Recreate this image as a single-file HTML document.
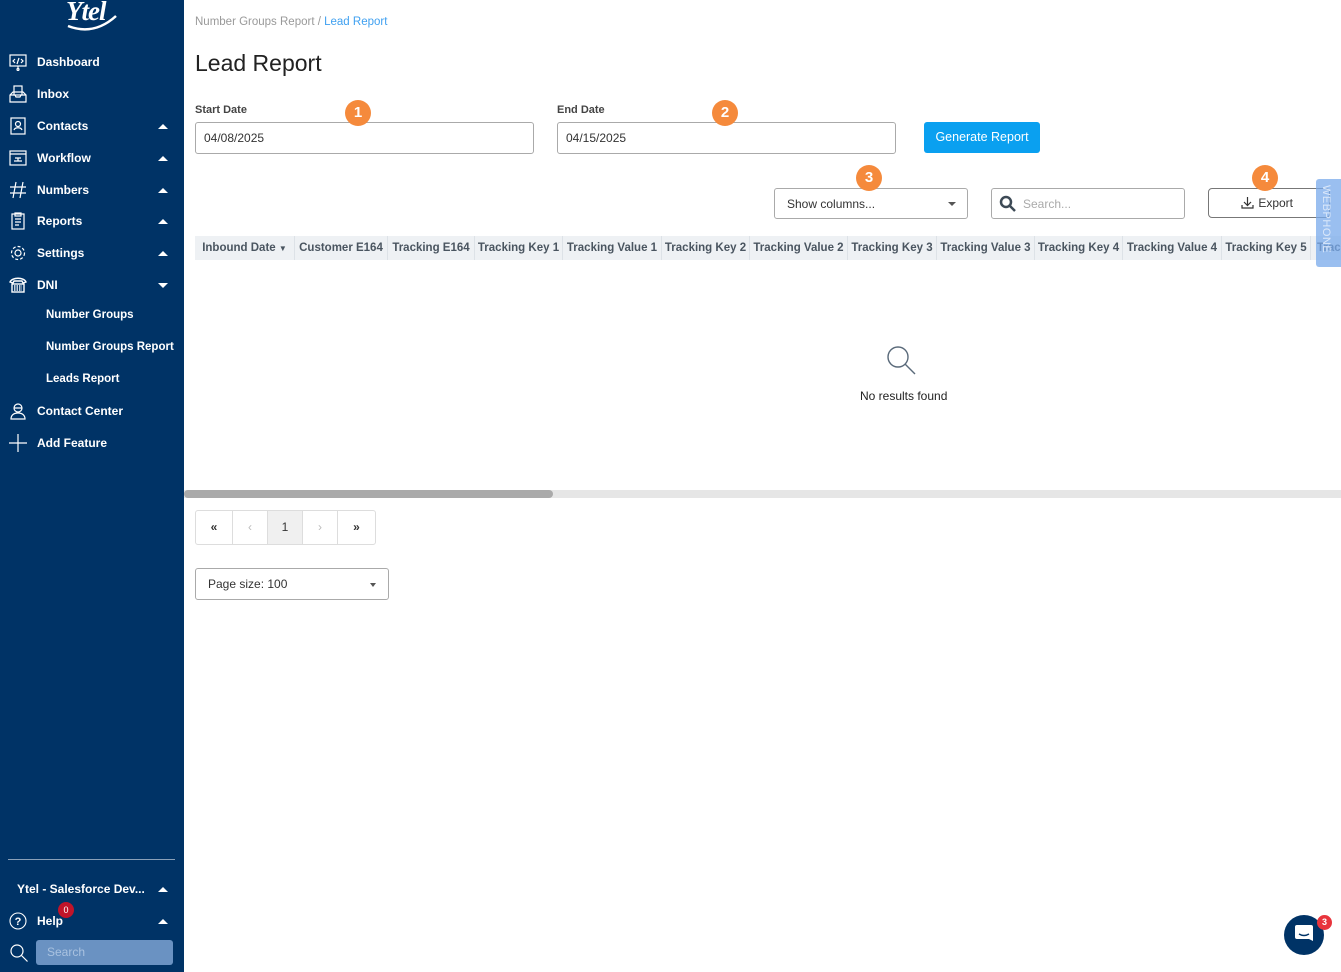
<!DOCTYPE html>
<html><head><meta charset="utf-8"><style>
*{box-sizing:border-box;margin:0;padding:0}
body{width:1341px;height:972px;overflow:hidden;font-family:"Liberation Sans",sans-serif;background:#fff;position:relative;color:#333}
.sb{position:absolute;left:0;top:0;width:184px;height:972px;background:#003366;color:#fff}
.it{position:absolute;left:0;width:184px;height:20px;font-size:12px;font-weight:bold;line-height:20px}
.it .ic{position:absolute;left:9px;top:1px;width:18px;height:18px}
.it .tx{position:absolute;left:37px}
.it .ar{position:absolute;left:158px;top:8px;width:0;height:0;border-left:5px solid transparent;border-right:5px solid transparent;border-bottom:5px solid #fff}
.it .ar.d{border-bottom:none;border-top:5px solid #fff}
.sub{position:absolute;left:46px;font-size:11.5px;font-weight:bold;line-height:16px}
.abs{position:absolute}
.lbl{font-size:11px;font-weight:bold;color:#444}
.inp{border:1px solid #aaa;border-radius:3px;background:#fff;font-size:12px;color:#333;padding-left:8px;line-height:30px}
.badge{position:absolute;width:26px;height:26px;border-radius:50%;background:#f58a3c;color:#fff;font-weight:bold;font-size:15px;text-align:center;line-height:26px}
.th{position:absolute;top:236px;height:24px;background:#eef1f4;border-right:1px solid #dde2e7;font-size:11.5px;font-weight:bold;color:#4a5560;line-height:24px;text-align:center;white-space:nowrap;overflow:hidden}
</style></head><body>
<div class="sb">
 <div class="abs" style="left:66px;top:-4px;font-size:27px;font-style:italic;font-weight:bold;font-family:'Liberation Serif',serif;letter-spacing:-1px">Ytel</div>
 <svg class="abs" style="left:64px;top:14px" width="56" height="18"><path d="M4 12 Q30 22 52 2" stroke="#fff" stroke-width="2.5" fill="none"/></svg>
 <div class="it" style="top:52px"><svg class="ic" viewBox="0 0 18 18" fill="none" stroke="#fff" stroke-width="1.2"><rect x="1" y="2" width="16" height="11"/><path d="M6 6l-2 2 2 2M12 6l2 2-2 2M10 5l-2 6M9 13v3"/><circle cx="9" cy="16.5" r="1"/></svg><span class="tx">Dashboard</span></div>
 <div class="it" style="top:84px"><svg class="ic" viewBox="0 0 18 18" fill="none" stroke="#fff" stroke-width="1.2"><rect x="5" y="1" width="8" height="9"/><path d="M1 10l3-3h10l3 3v7H1zM1 10h5l1 2h4l1-2h5"/></svg><span class="tx">Inbox</span></div>
 <div class="it" style="top:116px"><svg class="ic" viewBox="0 0 18 18" fill="none" stroke="#fff" stroke-width="1.2"><rect x="2" y="1" width="14" height="16"/><circle cx="9" cy="7" r="2.5"/><path d="M5 13c1-3 7-3 8 0"/></svg><span class="tx">Contacts</span><span class="ar"></span></div>
 <div class="it" style="top:148px"><svg class="ic" viewBox="0 0 18 18" fill="none" stroke="#fff" stroke-width="1.2"><rect x="1" y="2" width="16" height="14"/><path d="M1 5h16M6 9h6M9 9v3M5 12h8"/></svg><span class="tx">Workflow</span><span class="ar"></span></div>
 <div class="it" style="top:180px"><svg class="ic" viewBox="0 0 18 18" fill="none" stroke="#fff" stroke-width="1.2"><path d="M7 1L4 17M14 1l-3 16M1 6h16M1 12h16"/></svg><span class="tx">Numbers</span><span class="ar"></span></div>
 <div class="it" style="top:211px"><svg class="ic" viewBox="0 0 18 18" fill="none" stroke="#fff" stroke-width="1.2"><rect x="3" y="2" width="12" height="15"/><rect x="6" y="1" width="6" height="3"/><path d="M6 7h6M6 10h6M6 13h4"/></svg><span class="tx">Reports</span><span class="ar"></span></div>
 <div class="it" style="top:243px"><svg class="ic" viewBox="0 0 18 18" fill="none" stroke="#fff" stroke-width="1.2"><circle cx="9" cy="9" r="3"/><circle cx="9" cy="9" r="6.5" stroke-dasharray="3 2"/></svg><span class="tx">Settings</span><span class="ar"></span></div>
 <div class="it" style="top:275px"><svg class="ic" viewBox="0 0 18 18" fill="none" stroke="#fff" stroke-width="1.4"><path d="M1 6c2-5 14-5 16 0l-3 1-1-2H5L4 7z"/><rect x="3" y="8" width="12" height="8"/><path d="M5 10h8M5 12h8M5 14h8" stroke-dasharray="1.5 1"/></svg><span class="tx">DNI</span><span class="ar d"></span></div>
 <div class="sub" style="top:307px">Number Groups</div>
 <div class="sub" style="top:339px">Number Groups Report</div>
 <div class="sub" style="top:371px">Leads Report</div>
 <div class="it" style="top:401px"><svg class="ic" viewBox="0 0 18 18" fill="none" stroke="#fff" stroke-width="1.2"><circle cx="9" cy="6" r="4"/><path d="M2 17c0-4 3-6 7-6s7 2 7 6zM5 6h8"/></svg><span class="tx">Contact Center</span></div>
 <div class="it" style="top:433px"><svg class="ic" viewBox="0 0 18 18" fill="none" stroke="#fff" stroke-width="1.2"><path d="M9 0v18M0 9h18"/></svg><span class="tx">Add Feature</span></div>
 <div class="abs" style="left:8px;top:859px;width:167px;height:1px;background:#8aa0b8"></div>
 <div class="it" style="top:879px"><span class="tx" style="left:17px">Ytel - Salesforce Dev...</span><span class="ar"></span></div>
 <div class="it" style="top:911px"><svg class="ic" viewBox="0 0 18 18" fill="none" stroke="#fff" stroke-width="1.1"><circle cx="9" cy="9" r="8"/><text x="9" y="13" fill="#fff" stroke="none" font-size="11" text-anchor="middle" font-family="Liberation Sans">?</text></svg><span class="tx">Help</span><span class="ar"></span></div>
 <div class="abs" style="left:58px;top:902px;width:16px;height:16px;border-radius:50%;background:#c0142a;font-size:9px;text-align:center;line-height:16px">0</div>
 <svg class="abs" style="left:9px;top:943px" width="20" height="20" fill="none" stroke="#fff" stroke-width="1.2"><circle cx="8" cy="8" r="6"/><path d="M12.5 12.5l6 6"/></svg>
 <div class="abs" style="left:36px;top:940px;width:137px;height:25px;background:#6a92c2;border-radius:3px;font-size:12px;color:#a9c2e0;padding-left:11px;line-height:25px">Search</div>
</div>

<div class="abs" style="left:195px;top:16px;font-size:11.5px;color:#999">Number Groups Report / <span style="color:#3fa0f0">Lead Report</span></div>
<div class="abs" style="left:195px;top:50px;font-size:23px;color:#222;font-weight:300">Lead Report</div>

<div class="abs lbl" style="left:195px;top:104px">Start Date</div>
<div class="abs inp" style="left:195px;top:122px;width:339px;height:32px">04/08/2025</div>
<div class="abs lbl" style="left:557px;top:104px">End Date</div>
<div class="abs inp" style="left:557px;top:122px;width:339px;height:32px">04/15/2025</div>
<div class="abs" style="left:924px;top:122px;width:116px;height:31px;background:#0aa0f0;border-radius:3px;color:#fff;font-size:12.5px;text-align:center;line-height:31px">Generate Report</div>
<div class="badge" style="left:345px;top:100px">1</div>
<div class="badge" style="left:712px;top:100px">2</div>

<div class="abs inp" style="left:774px;top:188px;width:194px;height:31px;padding-left:12px">Show columns...</div>
<div class="abs" style="left:948px;top:202px;border-left:4px solid transparent;border-right:4px solid transparent;border-top:4px solid #555"></div>
<div class="badge" style="left:856px;top:165px">3</div>
<div class="abs inp" style="left:991px;top:188px;width:194px;height:31px;color:#aaa;padding-left:31px">Search...</div>
<svg class="abs" style="left:999px;top:195px" width="18" height="18" fill="none" stroke="#3d4a56" stroke-width="2.5"><circle cx="7" cy="7" r="5"/><path d="M11 11l5 5"/></svg>
<div class="abs" style="left:1208px;top:188px;width:122px;height:30px;border:1px solid #777;border-radius:4px;font-size:12px;text-align:center;line-height:28px;color:#333">&nbsp;&nbsp;&nbsp;&nbsp;Export</div>
<svg class="abs" style="left:1241px;top:196px" width="13" height="13" fill="none" stroke="#333" stroke-width="1.2"><path d="M6.5 1v8M3 6l3.5 3.5L10 6M1 9v3h11V9"/></svg>
<div class="badge" style="left:1252px;top:165px">4</div>

<div class="th" style="left:195px;width:100px">Inbound Date <span style="font-size:8px">▼</span></div>
<div class="th" style="left:295px;width:93px">Customer E164</div>
<div class="th" style="left:388px;width:87px">Tracking E164</div>
<div class="th" style="left:475px;width:88px">Tracking Key 1</div>
<div class="th" style="left:563px;width:99px">Tracking Value 1</div>
<div class="th" style="left:662px;width:88px">Tracking Key 2</div>
<div class="th" style="left:750px;width:98px">Tracking Value 2</div>
<div class="th" style="left:848px;width:89px">Tracking Key 3</div>
<div class="th" style="left:937px;width:98px">Tracking Value 3</div>
<div class="th" style="left:1035px;width:88px">Tracking Key 4</div>
<div class="th" style="left:1123px;width:99px">Tracking Value 4</div>
<div class="th" style="left:1222px;width:89px">Tracking Key 5</div>
<div class="th" style="left:1311px;width:30px;text-align:left;padding-left:6px;border:none">Tracking</div>
<div class="abs" style="left:1316px;top:179px;width:25px;height:88px;background:rgba(120,170,235,.75);border-radius:3px 0 0 3px"></div>
<div class="abs" style="left:1320px;top:185px;writing-mode:vertical-rl;font-size:11px;color:#dbe8fa;letter-spacing:.5px">WEBPHONE</div>

<svg class="abs" style="left:884px;top:344px" width="34" height="34" fill="none" stroke="#5a6a7a" stroke-width="1.4"><circle cx="14" cy="13" r="10"/><path d="M21 20l10 10"/></svg>
<div class="abs" style="left:860px;top:389px;font-size:12px;color:#222">No results found</div>

<div class="abs" style="left:184px;top:490px;width:1157px;height:8px;background:#e6e6e6"></div>
<div class="abs" style="left:184px;top:490px;width:369px;height:8px;background:#aaa;border-radius:4px"></div>

<div class="abs" style="left:195px;top:510px;width:181px;height:35px;border:1px solid #ddd;border-radius:3px;font-size:12px;line-height:33px;display:flex">
 <div style="width:37px;text-align:center;border-right:1px solid #ddd;font-weight:bold">«</div>
 <div style="width:35px;text-align:center;border-right:1px solid #ddd;color:#bbb">‹</div>
 <div style="width:35px;text-align:center;border-right:1px solid #ddd;background:#f0f0f0">1</div>
 <div style="width:35px;text-align:center;border-right:1px solid #ddd;color:#bbb">›</div>
 <div style="flex:1;text-align:center;font-weight:bold">»</div>
</div>
<div class="abs inp" style="left:195px;top:568px;width:194px;height:32px;padding-left:12px">Page size: 100</div>
<div class="abs" style="left:370px;top:583px;border-left:3.5px solid transparent;border-right:3.5px solid transparent;border-top:4px solid #555"></div>

<div class="abs" style="left:1284px;top:915px;width:40px;height:40px;border-radius:50%;background:#003366"></div>
<svg class="abs" style="left:1294px;top:924px" width="20" height="22"><path d="M3 1h14a2 2 0 0 1 2 2v14l-4-2H3a2 2 0 0 1-2-2V3a2 2 0 0 1 2-2z" fill="#fff"/><path d="M5 10q5 3 10 0" stroke="#003366" stroke-width="1.4" fill="none"/></svg>
<div class="abs" style="left:1317px;top:915px;width:15px;height:15px;border-radius:50%;background:#e8343c;color:#fff;font-size:9px;font-weight:bold;text-align:center;line-height:15px">3</div>
</body></html>
